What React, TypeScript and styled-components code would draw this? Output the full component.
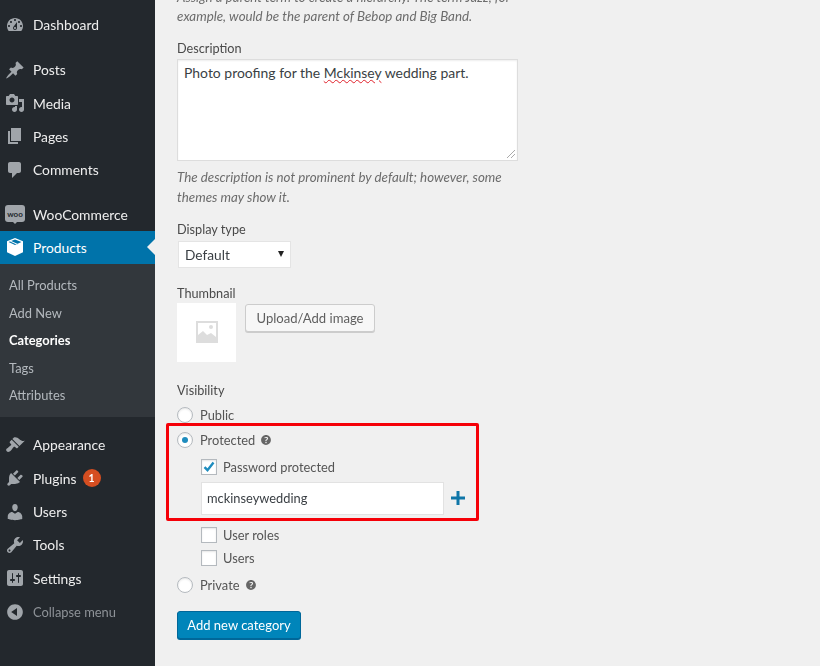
import React from "react";
import styled, { createGlobalStyle } from "styled-components";

const Global = createGlobalStyle`
  html, body { margin: 0; padding: 0; background: #f0f0f0; }
  body { font-family: Lato, "Open Sans", sans-serif; font-size: 13px; color: #444; }
  #root { width: 820px; height: 666px; overflow: hidden; }
`;

const Shell = styled.div`
  position: relative;
  display: flex;
  width: 820px;
  height: 666px;
  overflow: hidden;
  filter: blur(0.5px);
`;

const Sidebar = styled.nav`
  flex: 0 0 155px;
  background: #23282d;
  padding-top: 8px;
  display: flex;
  flex-direction: column;
`;

const MenuRow = styled.div<{ $active?: boolean; $muted?: boolean; $gap?: number }>`
  position: relative;
  display: flex;
  align-items: center;
  height: 33.4px;
  flex: none;
  margin-top: ${(p) => p.$gap ?? 0}px;
  background: ${(p) => (p.$active ? "#0073aa" : "transparent")};
  color: ${(p) => (p.$muted ? "#8d9297" : p.$active ? "#fff" : "#eee")};
  font-size: ${(p) => (p.$muted ? 12.9 : 13.85)}px;
`;

const IconSlot = styled.span<{ $active?: boolean }>`
  flex: 0 0 33px;
  display: flex;
  justify-content: center;
  padding-right: 3px;
  box-sizing: border-box;
  color: ${(p) => (p.$active ? "#fff" : "#a0a5aa")};
  svg { display: block; }
`;

const WooBadge = styled.span`
  position: relative;
  display: flex;
  align-items: center;
  justify-content: center;
  width: 20px;
  height: 17px;
  margin-top: -1px;
  border-radius: 3px;
  background: #a0a5aa;
  color: #23282d;
  font-size: 8px;
  font-weight: 700;
  line-height: 1;
  &::after {
    content: "";
    position: absolute;
    left: 8px;
    bottom: -2px;
    border: 2px solid transparent;
    border-top-color: #a0a5aa;
    border-bottom-width: 0;
  }
`;

const ActiveArrow = styled.span`
  position: absolute;
  right: 0;
  top: 50%;
  margin-top: -8px;
  border: 8px solid transparent;
  border-left-width: 0;
  border-right-color: #f0f0f0;
`;

const CountBadge = styled.span`
  display: inline-flex;
  align-items: center;
  justify-content: center;
  width: 18px;
  height: 18px;
  margin-left: 6px;
  border-radius: 50%;
  background: #d54e21;
  color: #fff;
  font-size: 10.5px;
  font-weight: 700;
`;

const SubMenu = styled.div`
  flex: none;
  background: #32373c;
  padding: 7.5px 0 8px;
  margin-bottom: 11px;
`;

const SubItem = styled.div<{ $current?: boolean }>`
  height: 27.5px;
  padding-left: 9px;
  display: flex;
  align-items: center;
  font-size: 12.9px;
  color: ${(p) => (p.$current ? "#fff" : "#b4b9be")};
  font-weight: ${(p) => (p.$current ? 700 : 400)};
`;

const Main = styled.main`
  flex: 1;
  padding-left: 22px;
  margin-top: -12px;
  display: flex;
  flex-direction: column;
  align-items: flex-start;
`;

const Hint = styled.p<{ $top?: number }>`
  margin: ${(p) => p.$top ?? 0}px 0 0;
  width: 340px;
  font-style: italic;
  font-size: 13.35px;
  line-height: 19.2px;
  color: #6c6c6c;
`;

const Label = styled.div<{ $top: number }>`
  margin-top: ${(p) => p.$top}px;
  font-size: 12.7px;
  line-height: 18px;
  color: #4a4a4a;
`;

const TextBox = styled.div`
  position: relative;
  box-sizing: border-box;
  width: 341px;
  height: 102px;
  margin-top: 2px;
  padding: 3px 6px;
  background: #fff;
  border: 1px solid #ddd;
  box-shadow: inset 0 1px 2px rgba(0, 0, 0, 0.07);
  font-size: 13.95px;
  line-height: 19px;
  color: #3a3f44;
`;

const Misspelt = styled.span`
  text-decoration: underline wavy #e0202a 1px;
  text-underline-offset: 1px;
`;

const Grip = styled.svg`
  position: absolute;
  right: 1px;
  bottom: 1px;
`;

const SelectBox = styled.div`
  box-sizing: border-box;
  width: 113px;
  height: 27px;
  margin: 3px 0 0 1px;
  padding: 0 6px;
  display: flex;
  align-items: center;
  justify-content: space-between;
  background: #fff;
  border: 1px solid #e4e4e4;
  font-size: 13.7px;
  color: #3a3f44;
`;

const Caret = styled.span`
  width: 0;
  height: 0;
  border: 3.5px solid transparent;
  border-top: 6px solid #222;
  border-bottom-width: 0;
`;

const ThumbRow = styled.div`
  display: flex;
  align-items: flex-start;
  gap: 9px;
  margin-top: 1px;
`;

const Thumb = styled.div`
  width: 59px;
  height: 59px;
  background: #fff;
  display: flex;
  align-items: center;
  justify-content: center;
  color: #ddd;
`;

const GhostButton = styled.div`
  box-sizing: border-box;
  width: 130px;
  height: 28px;
  margin-top: 1px;
  display: flex;
  align-items: center;
  justify-content: center;
  background: #f7f7f7;
  border: 1px solid #ccc;
  border-radius: 3px;
  box-shadow: 0 1px 0 #ccc;
  color: #5f5f5f;
  font-size: 13.1px;
`;

const OptionRow = styled.div<{ $indent?: boolean; $height: number; $top?: number }>`
  display: flex;
  align-items: center;
  height: ${(p) => p.$height}px;
  margin-top: ${(p) => p.$top ?? 0}px;
  gap: ${(p) => (p.$indent ? 6 : 7)}px;
  padding-left: ${(p) => (p.$indent ? 24 : 0)}px;
  font-size: 12.85px;
  color: #555;
`;

const Radio = styled.span<{ $on?: boolean }>`
  box-sizing: border-box;
  width: 16px;
  height: 16px;
  border-radius: 50%;
  border: 1px solid #b4b9be;
  background: #fff;
  box-shadow: inset 0 1px 2px rgba(0, 0, 0, 0.1);
  display: flex;
  align-items: center;
  justify-content: center;
  &::after {
    content: "";
    display: ${(p) => (p.$on ? "block" : "none")};
    width: 6px;
    height: 6px;
    border-radius: 50%;
    background: #1e8cbe;
  }
`;

const Check = styled.span`
  box-sizing: border-box;
  width: 16px;
  height: 16px;
  border: 1px solid #b4b9be;
  background: #fff;
  box-shadow: inset 0 1px 2px rgba(0, 0, 0, 0.1);
  display: flex;
  align-items: center;
  justify-content: center;
  color: #1e8cbe;
`;

const Help = styled.svg`
  color: #666;
  margin-left: -3px;
`;

const PasswordRow = styled.div`
  display: flex;
  align-items: center;
  gap: 7px;
  margin: 0 0 9px 24px;
`;

const PasswordField = styled.div`
  box-sizing: border-box;
  width: 243px;
  height: 33px;
  padding: 0 5px;
  display: flex;
  align-items: center;
  background: #fff;
  border: 1px solid #e2e2e2;
  font-size: 12.85px;
  color: #3a3f44;
`;

const PlusIcon = styled.svg`
  color: #0f76a8;
`;

const PrimaryButton = styled.div`
  box-sizing: border-box;
  width: 124px;
  height: 28px;
  margin-top: 10px;
  display: flex;
  align-items: center;
  justify-content: center;
  background: #0085ba;
  border: 1px solid #006799;
  border-radius: 3px;
  box-shadow: 0 1px 0 #006799;
  color: #fff;
  font-size: 13px;
`;

const Highlight = styled.div`
  position: absolute;
  left: 166px;
  top: 423px;
  width: 313px;
  height: 98px;
  box-sizing: border-box;
  border: 3.5px solid #f50008;
  border-radius: 2px;
  pointer-events: none;
`;

const paths: Record<string, string> = {
  dashboard:
    "M3.76 16h12.48c1.1-1.37 1.76-3.11 1.76-5 0-4.42-3.58-8-8-8s-8 3.58-8 8c0 1.89.66 3.63 1.76 5zM10 4c.55 0 1 .45 1 1s-.45 1-1 1-1-.45-1-1 .45-1 1-1zM6 6c.55 0 1 .45 1 1s-.45 1-1 1-1-.45-1-1 .45-1 1-1zm8 0c.55 0 1 .45 1 1s-.45 1-1 1-1-.45-1-1 .45-1 1-1zm-5.37 5.55L12 7v6c0 1.1-.9 2-2 2s-2-.9-2-2c0-.57.24-1.08.63-1.45zM4 10c.55 0 1 .45 1 1s-.45 1-1 1-1-.45-1-1 .45-1 1-1zm12 0c.55 0 1 .45 1 1s-.45 1-1 1-1-.45-1-1 .45-1 1-1zm-5 3c0-.55-.45-1-1-1s-1 .45-1 1 .45 1 1 1 1-.45 1-1z",
  posts:
    "M10.44 3.02l1.82-1.82 6.36 6.35-1.83 1.82c-1.05-.68-2.48-.57-3.41.36l-.75.75c-.92.93-1.04 2.35-.35 3.41l-1.83 1.82-2.41-2.41-2.8 2.79c-.42.42-3.38 2.71-3.8 2.29s1.86-3.39 2.28-3.81l2.79-2.79L4.1 9.36l1.83-1.82c1.05.69 2.48.57 3.4-.36l.75-.75c.93-.92 1.05-2.35.36-3.41z",
  media:
    "M13 11V4c0-.55-.45-1-1-1h-1.67L9 1H5L3.67 3H2c-.55 0-1 .45-1 1v7c0 .55.45 1 1 1h10c.55 0 1-.45 1-1zM7 4.500c1.38 0 2.5 1.12 2.5 2.5S8.38 9.5 7 9.5 4.5 8.38 4.5 7 5.62 4.5 7 4.5zM14 6h5v10.5c0 1.38-1.12 2.5-2.5 2.5S14 17.88 14 16.5s1.12-2.5 2.5-2.5c.17 0 .34.02.5.05V9h-3V6zm-4 8.05V13h2v3.5c0 1.38-1.12 2.5-2.5 2.5S7 17.88 7 16.5 8.12 14 9.5 14c.17 0 .34.02.5.05z",
  pages: "M6 15V2h10v13H6zm-1 1h8v2H3V5h2v11z",
  comments: "M5 2h9c1.1 0 2 .9 2 2v7c0 1.1-.9 2-2 2h-2l-5 5v-5H5c-1.1 0-2-.9-2-2V4c0-1.1.9-2 2-2z",
  appearance:
    "M14.48 11.06L7.41 3.99l1.5-1.5c.5-.56 2.3-.47 3.51.32 1.21.8 1.43 1.28 2.91 2.1 1.18.64 2.45 1.26 4.45.85zm-.71.71L6.7 4.7 4.93 6.47c-.39.39-.39 1.02 0 1.41l1.06 1.06c.39.39.39 1.03 0 1.42-.6.6-1.43 1.11-2.21 1.69-.35.26-.7.53-1.01.84C1.43 13.23.4 14.96 1.73 16.29c1.33 1.33 3.06.3 4.41-1.05.31-.31.58-.66.84-1.01.58-.78 1.09-1.61 1.69-2.21.39-.39 1.03-.39 1.42 0l1.06 1.06c.39.39 1.02.39 1.41 0z",
  plugins:
    "M13.11 4.36L9.87 7.6 8 5.73l3.24-3.24c.35-.34 1.05-.2 1.56.32.52.51.66 1.21.31 1.55zm-8 1.77l.91-1.12 9.01 9.01-1.19.84c-.71.71-2.63 1.16-3.82 1.16H6.14L4.9 17.26c-.59.59-1.54.59-2.12 0-.59-.58-.59-1.53 0-2.12l1.24-1.24v-3.88c0-1.13.4-3.19 1.09-3.89zm7.26 3.97l3.24-3.24c.34-.35 1.04-.21 1.55.31.52.51.66 1.21.31 1.55l-3.24 3.25z",
  users:
    "M10 9.25c-2.27 0-2.73-3.44-2.73-3.44C7 4.02 7.82 2 9.97 2c2.16 0 2.98 2.02 2.71 3.81 0 0-.41 3.44-2.68 3.44zm0 2.57L12.72 10c2.39 0 4.52 2.33 4.52 4.53v2.49s-3.65 1.13-7.24 1.13c-3.65 0-7.24-1.13-7.24-1.13v-2.49c0-2.25 1.94-4.48 4.47-4.48z",
  tools:
    "M16.68 9.77c-1.34 1.34-3.3 1.67-4.95.99l-5.41 6.52c-.99.99-2.59.99-3.58 0s-.99-2.59 0-3.57l6.52-5.42c-.68-1.65-.35-3.61.99-4.95 1.28-1.28 3.12-1.62 4.72-1.06l-2.89 2.89 2.82 2.82 2.86-2.87c.53 1.58.18 3.39-1.08 4.65zM3.81 16.21c.4.39 1.04.39 1.43 0 .4-.4.4-1.04 0-1.43-.39-.4-1.03-.4-1.43 0-.39.39-.39 1.03 0 1.43z",
  settings:
    "M18 16V4c0-1.1-.9-2-2-2H4c-1.1 0-2 .9-2 2v12c0 1.1.9 2 2 2h12c1.1 0 2-.9 2-2zM8 11h1c.55 0 1 .45 1 1s-.45 1-1 1H8v1.5c0 .28-.22.5-.5.5s-.5-.22-.5-.5V13H6c-.55 0-1-.45-1-1s.45-1 1-1h1V5.5c0-.28.22-.5.5-.5s.5.22.5.5V11zm5-2h-1c-.55 0-1-.45-1-1s.45-1 1-1h1V5.5c0-.28.22-.5.5-.5s.5.22.5.5V7h1c.55 0 1 .45 1 1s-.45 1-1 1h-1v5.5c0 .28-.22.5-.5.5s-.5-.22-.5-.5V9z",
  collapse:
    "M10 2.16c4.33 0 7.84 3.51 7.84 7.84s-3.51 7.84-7.84 7.84S2.16 14.33 2.16 10 5.71 2.16 10 2.16zm2 11.72V6.12L6.18 9.97z",
  products:
    "M10 1l8 3.2v11L10 19l-8-3.8v-11L10 1zM3.6 5.100L10 8l6.4-2.9L10 2.6 3.6 5.100zM6.2 3.900l6.6 3-1.2.5L5 4.400l1.2-.5z",
};

const help =
  "M17 10c0-3.87-3.14-7-7-7-3.87 0-7 3.13-7 7s3.13 7 7 7c3.86 0 7-3.13 7-7zm-6.3 1.48H9.14v-.43c0-.38.08-.7.24-.98s.46-.57.88-.89c.41-.29.68-.53.81-.71.14-.18.2-.39.2-.62 0-.25-.09-.44-.28-.58-.19-.13-.45-.19-.79-.19-.58 0-1.25.19-2 .57l-.64-1.28c.87-.49 1.8-.74 2.77-.74.81 0 1.45.2 1.92.58.48.39.71.91.71 1.55 0 .43-.09.8-.29 1.11-.19.32-.57.67-1.11 1.06-.38.28-.61.49-.71.63-.1.15-.15.34-.15.57v.35zm-1.47 2.74c-.18-.17-.27-.42-.27-.73 0-.33.08-.58.26-.75s.43-.25.77-.25c.32 0 .57.09.75.26s.27.42.27.74c0 .3-.09.55-.27.72-.18.18-.43.27-.75.27-.33 0-.58-.09-.76-.26z";

const Dash = ({ name }: { name: string }) => (
  <svg width="20" height="20" viewBox="0 0 20 20" fill="currentColor" fillRule="evenodd">
    <path d={paths[name]} />
  </svg>
);

const HelpIcon = () => (
  <Help width="14" height="14" viewBox="0 0 20 20" fill="currentColor" fillRule="evenodd">
    <path d={help} />
  </Help>
);

const Item = ({ icon, label, gap, muted }: { icon: string; label: string; gap?: number; muted?: boolean }) => (
  <MenuRow $gap={gap} $muted={muted}>
    <IconSlot>
      <Dash name={icon} />
    </IconSlot>
    {label}
  </MenuRow>
);

const Tick = () => (
  <svg width="14" height="14" viewBox="0 0 14 14" fill="none" stroke="currentColor" strokeWidth="2.4">
    <path d="M2.5 7.2l3 3 6-7.6" />
  </svg>
);

export default function App() {
  return (
    <>
      <Global />
      <Shell>
        <Sidebar>
          <Item icon="dashboard" label="Dashboard" />
          <Item icon="posts" label="Posts" gap={11.6} />
          <Item icon="media" label="Media" />
          <Item icon="pages" label="Pages" />
          <Item icon="comments" label="Comments" />
          <MenuRow $gap={10.8}>
            <IconSlot>
              <WooBadge>woo</WooBadge>
            </IconSlot>
            WooCommerce
          </MenuRow>
          <MenuRow $active>
            <IconSlot $active>
              <Dash name="products" />
            </IconSlot>
            Products
            <ActiveArrow />
          </MenuRow>
          <SubMenu>
            <SubItem>All Products</SubItem>
            <SubItem>Add New</SubItem>
            <SubItem $current>Categories</SubItem>
            <SubItem>Tags</SubItem>
            <SubItem>Attributes</SubItem>
          </SubMenu>
          <Item icon="appearance" label="Appearance" />
          <MenuRow>
            <IconSlot>
              <Dash name="plugins" />
            </IconSlot>
            Plugins
            <CountBadge>1</CountBadge>
          </MenuRow>
          <Item icon="users" label="Users" />
          <Item icon="tools" label="Tools" />
          <Item icon="settings" label="Settings" />
          <Item icon="collapse" label="Collapse menu" muted />
        </Sidebar>
        <Main>
          <Hint>
            Assign a parent term to create a hierarchy. The term Jazz, for example, would be the parent of Bebop and Big
            Band.
          </Hint>
          <Label $top={13}>Description</Label>
          <TextBox>
            Photo proofing for the <Misspelt>Mckinsey</Misspelt> wedding part.
            <Grip width="11" height="11" viewBox="0 0 11 11" stroke="#aaa" fill="none">
              <path d="M2 10l8-8M6 10l4-4" />
            </Grip>
          </TextBox>
          <Hint $top={7}>The description is not prominent by default; however, some themes may show it.</Hint>
          <Label $top={13}>Display type</Label>
          <SelectBox>
            Default
            <Caret />
          </SelectBox>
          <Label $top={16}>Thumbnail</Label>
          <ThumbRow>
            <Thumb>
              <svg width="22" height="22" viewBox="0 0 22 22" fill="currentColor" fillRule="evenodd">
                <path d="M0 0h22v22H0zM2 2v12l5-4 4 4 4-2 5 4V2zM15 4a2 2 0 110 4 2 2 0 010-4z" />
              </svg>
            </Thumb>
            <GhostButton>Upload/Add image</GhostButton>
          </ThumbRow>
          <Label $top={19}>Visibility</Label>
          <OptionRow $height={25} $top={4}>
            <Radio />
            Public
          </OptionRow>
          <OptionRow $height={25}>
            <Radio $on />
            Protected
            <HelpIcon />
          </OptionRow>
          <OptionRow $indent $height={29}>
            <Check>
              <Tick />
            </Check>
            Password protected
          </OptionRow>
          <PasswordRow>
            <PasswordField>mckinseywedding</PasswordField>
            <PlusIcon width="14" height="14" viewBox="0 0 14 14" fill="currentColor">
              <path d="M5.5 0h3v5.5H14v3H8.500V14h-3V8.500H0v-3h5.500z" />
            </PlusIcon>
          </PasswordRow>
          <OptionRow $indent $height={23}>
            <Check />
            User roles
          </OptionRow>
          <OptionRow $indent $height={23}>
            <Check />
            Users
          </OptionRow>
          <OptionRow $height={31}>
            <Radio />
            Private
            <HelpIcon />
          </OptionRow>
          <PrimaryButton>Add new category</PrimaryButton>
        </Main>
        <Highlight />
      </Shell>
    </>
  );
}
